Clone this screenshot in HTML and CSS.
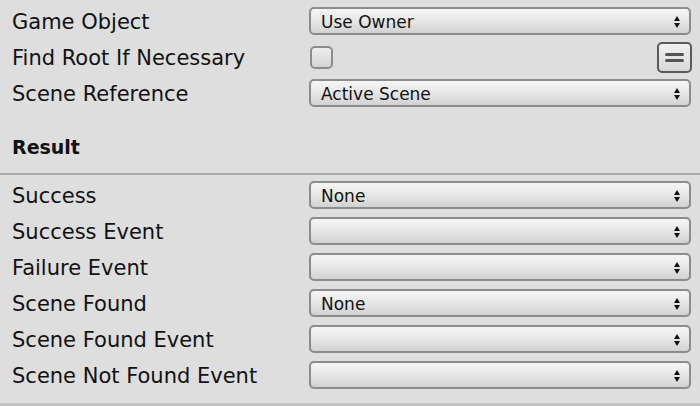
FILE: index.html
```html
<!DOCTYPE html>
<html>
<head>
<meta charset="utf-8">
<link rel="stylesheet" href="styles.css">
</head>
<body>
<div class="inspector">
  <div class="section top">
    <div class="row">
      <span class="label">Game Object</span>
      <div class="popup"><span class="val">Use Owner</span><svg class="arrows" width="6" height="12" viewBox="0 0 6 12"><path d="M3 0 L6 5 L0 5 Z M0 7 L6 7 L3 12 Z" fill="#111"/></svg></div>
    </div>
    <div class="row">
      <span class="label">Find Root If Necessary</span>
      <div class="field-check">
        <span class="checkbox"></span>
        <span class="eqbtn"><span class="bar"></span><span class="bar"></span></span>
      </div>
    </div>
    <div class="row">
      <span class="label">Scene Reference</span>
      <div class="popup"><span class="val">Active Scene</span><svg class="arrows" width="6" height="12" viewBox="0 0 6 12"><path d="M3 0 L6 5 L0 5 Z M0 7 L6 7 L3 12 Z" fill="#111"/></svg></div>
    </div>
  </div>
  <div class="header">Result</div>
  <div class="section result">
    <div class="row">
      <span class="label">Success</span>
      <div class="popup"><span class="val">None</span><svg class="arrows" width="6" height="12" viewBox="0 0 6 12"><path d="M3 0 L6 5 L0 5 Z M0 7 L6 7 L3 12 Z" fill="#111"/></svg></div>
    </div>
    <div class="row">
      <span class="label">Success Event</span>
      <div class="popup"><span class="val"></span><svg class="arrows" width="6" height="12" viewBox="0 0 6 12"><path d="M3 0 L6 5 L0 5 Z M0 7 L6 7 L3 12 Z" fill="#111"/></svg></div>
    </div>
    <div class="row">
      <span class="label">Failure Event</span>
      <div class="popup"><span class="val"></span><svg class="arrows" width="6" height="12" viewBox="0 0 6 12"><path d="M3 0 L6 5 L0 5 Z M0 7 L6 7 L3 12 Z" fill="#111"/></svg></div>
    </div>
    <div class="row">
      <span class="label">Scene Found</span>
      <div class="popup"><span class="val">None</span><svg class="arrows" width="6" height="12" viewBox="0 0 6 12"><path d="M3 0 L6 5 L0 5 Z M0 7 L6 7 L3 12 Z" fill="#111"/></svg></div>
    </div>
    <div class="row">
      <span class="label">Scene Found Event</span>
      <div class="popup"><span class="val"></span><svg class="arrows" width="6" height="12" viewBox="0 0 6 12"><path d="M3 0 L6 5 L0 5 Z M0 7 L6 7 L3 12 Z" fill="#111"/></svg></div>
    </div>
    <div class="row">
      <span class="label">Scene Not Found Event</span>
      <div class="popup"><span class="val"></span><svg class="arrows" width="6" height="12" viewBox="0 0 6 12"><path d="M3 0 L6 5 L0 5 Z M0 7 L6 7 L3 12 Z" fill="#111"/></svg></div>
    </div>
  </div>
</div>
</body>
</html>
```

FILE: styles.css
```css
html, body {
  margin: 0;
  padding: 0;
  background: #dedede;
}
.inspector {
  width: 700px;
  height: 406px;
  box-sizing: border-box;
  font-family: "DejaVu Sans", sans-serif;
  color: #111;
  border-bottom: 3px solid #c4c4c4;
}
.section.top {
  padding-top: 3px;
}
.row {
  display: grid;
  grid-template-columns: 297px 382px;
  align-items: center;
  height: 36px;
  padding-left: 12px;
}
.label {
  font-size: 21px;
  line-height: 24px;
  padding-top: 2px;
  white-space: nowrap;
}
.popup {
  height: 28px;
  box-sizing: border-box;
  border: 2px solid #8c8c8c;
  border-radius: 5px;
  background: linear-gradient(#f6f6f6, #e8e8e8 45%, #d2d2d2);
  display: flex;
  align-items: center;
  justify-content: space-between;
  padding: 1px 9px 0 10px;
}
.val {
  font-size: 17px;
  color: #111;
}
.arrows {
  display: block;
}
.field-check {
  display: flex;
  align-items: center;
  justify-content: space-between;
  height: 36px;
}
.checkbox {
  width: 23px;
  height: 23px;
  box-sizing: border-box;
  margin-left: 1px;
  border: 2px solid #8c8c8c;
  border-radius: 5px;
  background: linear-gradient(#eeeeee, #d4d4d4);
}
.eqbtn {
  width: 35px;
  height: 31px;
  box-sizing: border-box;
  margin-right: -1px;
  border: 2px solid #5a5a5a;
  border-radius: 5px;
  background: linear-gradient(#f2f2f2, #d8d8d8);
  display: flex;
  flex-direction: column;
  align-items: center;
  justify-content: center;
  gap: 3px;
}
.eqbtn .bar {
  width: 19px;
  height: 3px;
  border-radius: 2px;
  background: #555;
}
.header {
  height: 64px;
  box-sizing: border-box;
  padding: 25px 0 0 12px;
  font-size: 19px;
  font-weight: bold;
  border-bottom: 2px solid #ababab;
}
.section.result {
  padding-top: 2px;
}
```
